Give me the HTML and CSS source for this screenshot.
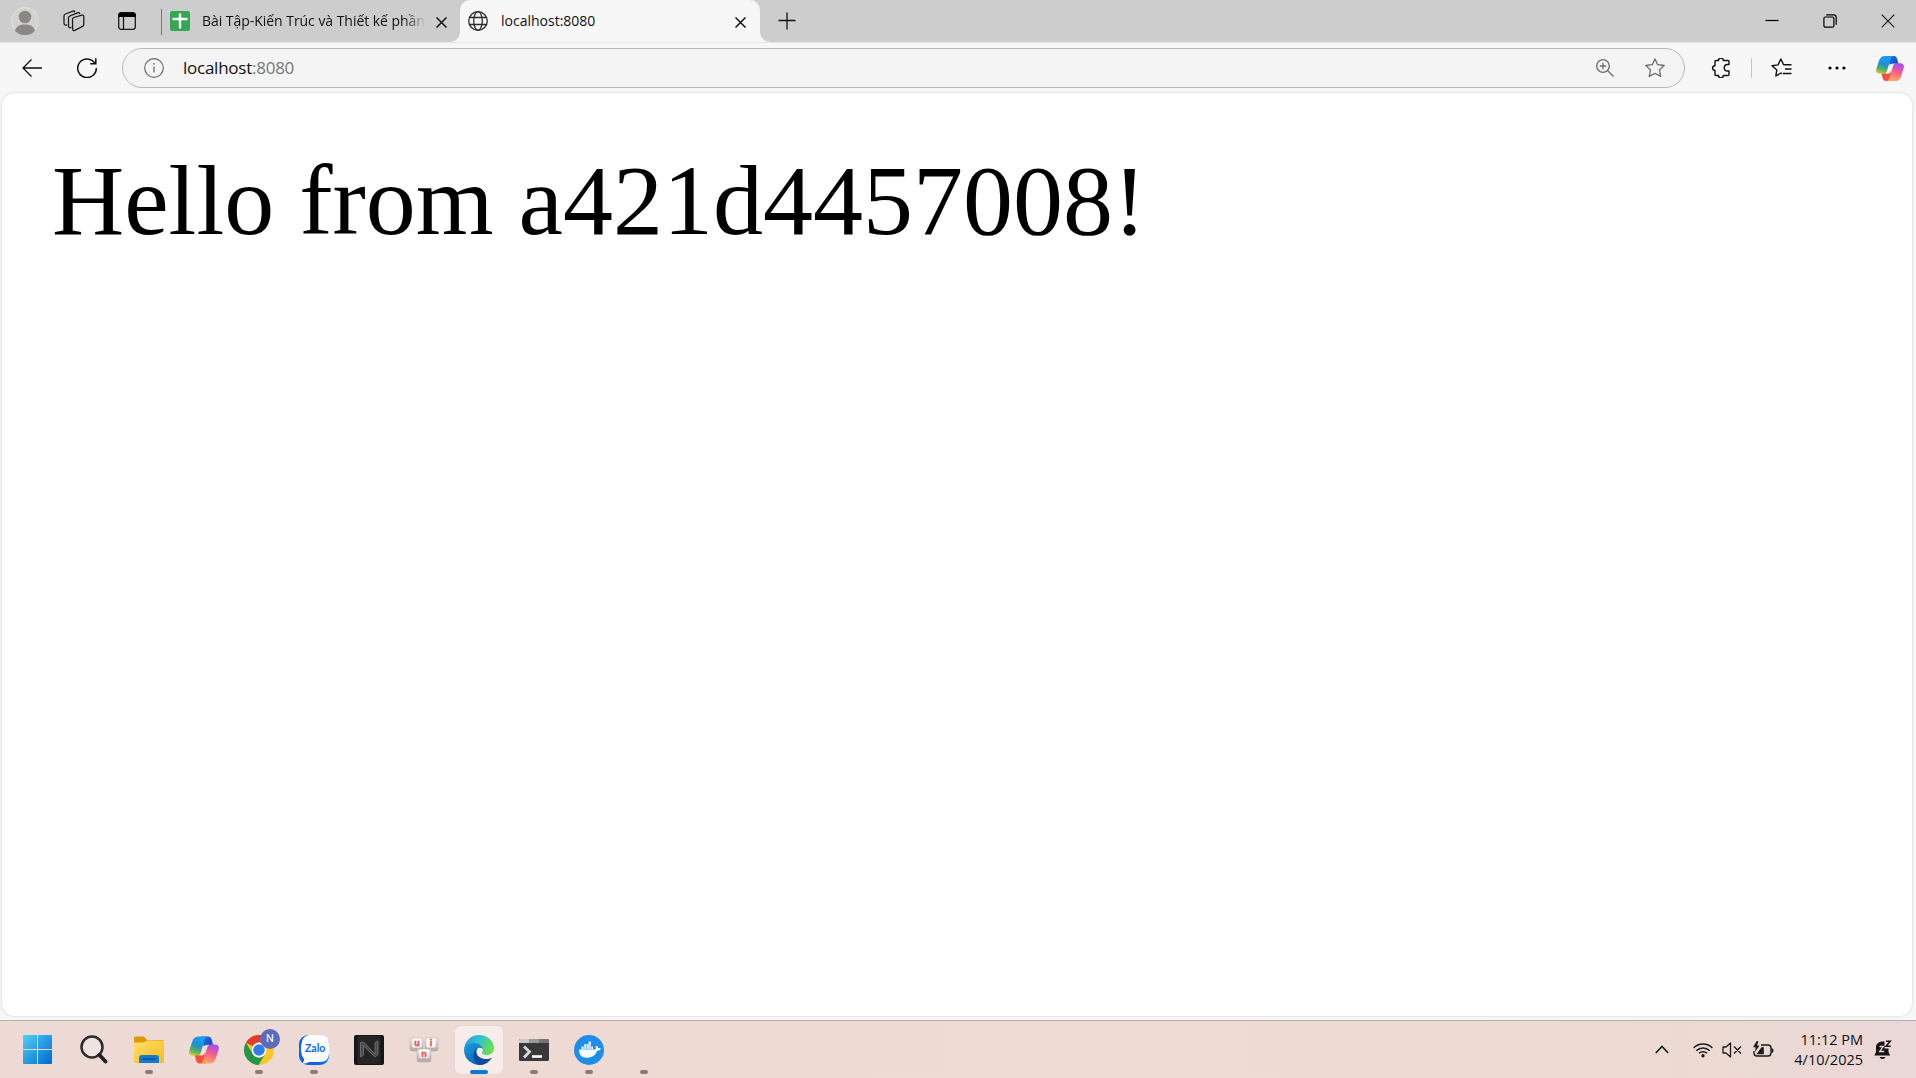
FILE: index.html
```html
<!DOCTYPE html>
<html lang="vi">
<head>
<meta charset="utf-8">
<title>localhost:8080</title>
<link rel="stylesheet" href="styles.css">
</head>
<body>
<svg class="defs" width="0" height="0" aria-hidden="true">
  <defs>
    <linearGradient id="cpA" x1=".3" y1="0" x2="0" y2="1"><stop offset="0" stop-color="#1a9df0"/><stop offset=".4" stop-color="#1f8fd0"/><stop offset=".7" stop-color="#55b35c"/><stop offset="1" stop-color="#f4cf1e"/></linearGradient>
    <linearGradient id="cpB" x1=".7" y1="0" x2=".4" y2="1"><stop offset="0" stop-color="#a24cf0"/><stop offset=".45" stop-color="#f05c90"/><stop offset="1" stop-color="#fcaa60"/></linearGradient>
    <linearGradient id="cpC" x1="0" y1="0" x2="1" y2="1"><stop offset="0" stop-color="#1b7be0"/><stop offset="1" stop-color="#1a3cc0"/></linearGradient>
    <linearGradient id="win" x1="0" y1="0" x2="1" y2="1"><stop offset="0" stop-color="#4fd0fb"/><stop offset="1" stop-color="#0069cc"/></linearGradient>
    <linearGradient id="fold" x1="0" y1="0" x2="1" y2="1"><stop offset="0" stop-color="#ffdf6e"/><stop offset="1" stop-color="#fbbb15"/></linearGradient>
    <linearGradient id="edA" x1="0" y1="0" x2="1" y2=".35"><stop offset="0" stop-color="#1c98d8"/><stop offset=".5" stop-color="#2fc0d8"/><stop offset="1" stop-color="#66df50"/></linearGradient>
    <linearGradient id="edB" x1="0" y1="0" x2=".6" y2="1"><stop offset="0" stop-color="#1c9be0"/><stop offset="1" stop-color="#0b63b8"/></linearGradient>
    <linearGradient id="key" x1="0" y1="0" x2="0" y2="1"><stop offset="0" stop-color="#f4f2f1"/><stop offset="1" stop-color="#aaa5a3"/></linearGradient>
    <symbol id="copilot" viewBox="0 0 30 28">
      <path fill="url(#cpC)" d="M12 .5h7c2.400 0 3.300 1.500 4 4L24 9h-3.500c-2.500 0-4 1-5 4z"/>
      <path fill="#f0513c" d="M17 27.500h-6c-2.500 0-3.500-1.500-4.200-4L5.800 19h4c3 0 4.500-1 5.500-4z"/>
      <path fill="url(#cpA)" d="M9.500.5H19c-2 .5-3 2-3.700 4.500L12 16c-.8 2.500-2 3.500-4.500 3.500H4c-3 0-4.400-2-3.700-5L3.500 5c.9-2.800 3-4.500 6-4.500z"/>
      <path fill="url(#cpB)" d="M20.500 27.500H11c2-.5 3-2 3.700-4.500L18 12c.8-2.500 2-3.500 4.500-3.500H26c3 0 4.400 2 3.700 5L26.500 23c-.9 2.800-3 4.500-6 4.500z"/>
      <path class="hole" d="M20.500 8.700c-2.400.3-3 1.500-3.700 4.200l-1.700 5.200c-.6 1.600-2 1.500-5.600 1.300 1.900-.3 2.500-1.600 3.200-4l1.400-4c.8-2.200 2.800-2.900 6.400-2.700z"/>
    </symbol>
  </defs>
</svg>

<header class="tabstrip">
  <div class="strip-left">
    <svg class="avatar" width="28" height="28" viewBox="0 0 28 28"><circle cx="14" cy="14" r="13.500" fill="#d5d3cf" stroke="#e2dfd9"/><circle cx="14" cy="10" r="6.300" fill="#8b8785"/><path d="M4 24c1-5 5-6.500 10-6.500S23 19 24 24a14 14 0 0 1-20 0z" fill="#8b8785"/></svg>
    <svg class="workspaces" width="22" height="22" viewBox="0 0 22 22" fill="none" stroke="#1c1c1c" stroke-width="1.300" stroke-linejoin="round" stroke-linecap="round"><path d="M9.500 9.500q0-1.500 1.400-2L18.800 5.200q2-.4 2 1.300v8q0 1.400-1.300 1.900l-7.700 3.900q-2.100.8-2.100-1.300z"/><path d="M8 17.500q-2.500.7-2.500-1.500V7.800q0-1.500 1.500-2L15 2.700q1.200-.3 1.700.8"/><path d="M3.700 15Q1 15.400 1 13V6q0-1.500 1.500-2L10 1.100q1.200-.4 1.700.6"/></svg>
    <svg class="tabactions" width="18" height="18" viewBox="0 0 18 18"><rect x=".7" y=".9" width="16.600" height="16.400" rx="2.500" fill="none" stroke="#1a1a1a" stroke-width="1.300"/><path d="M.3 5V3Q.3.3 3 .3h12q2.700 0 2.700 2.700v2z" fill="#000"/><path d="M5.500 5v12" stroke="#1a1a1a" stroke-width="1.300"/></svg>
    <span class="strip-divider"></span>
    <svg class="sheets" width="20" height="20" viewBox="0 0 20 20"><rect width="20" height="20" rx="2" fill="#33a852"/><path d="M10 2.500v15M2.500 8h15" stroke="#fff" stroke-width="2.400"/></svg>
    <span class="tab-title faded">Bài Tập-Kiến Trúc và Thiết kế phần</span>
    <svg class="close" width="11" height="11" viewBox="0 0 11 11" stroke="#111" stroke-width="1.500"><path d="M.5.500l10 10M10.500.500l-10 10"/></svg>
  </div>
  <div class="tab-active">
    <svg width="20" height="20" viewBox="0 0 20 20" fill="none" stroke="#2a2a2a" stroke-width="1.300"><circle cx="10" cy="10" r="9.300"/><ellipse cx="10" cy="10" rx="4.300" ry="9.300"/><path d="M1.500 6.500h17M1.500 13.500h17"/></svg>
    <span class="tab-title current">localhost:8080</span>
    <svg class="close" width="11" height="11" viewBox="0 0 11 11" stroke="#111" stroke-width="1.500"><path d="M.5.500l10 10M10.500.500l-10 10"/></svg>
  </div>
  <div class="strip-right">
    <svg width="18" height="18" viewBox="0 0 18 18" stroke="#111" stroke-width="1.300"><path d="M9 .5v17M.5 8.500h17"/></svg>
    <div class="window-buttons">
      <svg width="14" height="14" viewBox="0 0 14 14"><path d="M.5 6.500h13" stroke="#000" stroke-width="1.200"/></svg>
      <svg width="14" height="14" viewBox="0 0 14 14" fill="none" stroke="#000" stroke-width="1.200"><rect x=".9" y="3" width="10" height="10.200" rx="1.500"/><path d="M3.200.8h7.500q2.500 0 2.500 2.500v7.500"/></svg>
      <svg width="14" height="14" viewBox="0 0 14 14" stroke="#222" stroke-width="1.200"><path d="M.7.700l12.600 12.600M13.300.700L.7 13.300"/></svg>
    </div>
  </div>
</header>

<nav class="toolbar">
  <svg class="back" width="20" height="18" viewBox="0 0 20 18" fill="none" stroke="#111" stroke-width="1.300"><path d="M20 9H.8M9.500.5L1 9l8.500 8.500"/></svg>
  <svg class="reload" width="20" height="20" viewBox="0 0 20 20" fill="none" stroke="#111" stroke-width="1.500"><path d="M18 5.500A9.300 9.300 0 1 0 19.300 10M18.800.3v5.500h-5.600"/></svg>
  <div class="address">
    <svg class="info" width="20" height="20" viewBox="0 0 20 20"><circle cx="10" cy="10" r="9.300" fill="none" stroke="#6b6b6b" stroke-width="1.200"/><path d="M10 8.500v6" stroke="#6b6b6b" stroke-width="1.300"/><circle cx="10" cy="5.800" r=".9" fill="#6b6b6b"/></svg>
    <span class="url">localhost<span class="port">:8080</span></span>
    <svg class="zoom" width="18" height="18" viewBox="0 0 18 18" fill="none" stroke="#6b6b6b" stroke-width="1.300"><circle cx="7" cy="7" r="6.300"/><path d="M11.500 11.500l6 6M7 3.800v6.400M3.800 7h6.400"/></svg>
    <svg class="star" width="20" height="20" viewBox="0 0 20 20" fill="none" stroke="#6b6b6b" stroke-width="1.300" stroke-linejoin="round"><path d="M10 .9l2.700 5.800 6.500.8-4.700 4.400 1.200 6.500L10 15.300l-5.700 3.100 1.200-6.500L.8 7.500l6.500-.8z"/></svg>
  </div>
  <svg class="ext" width="20" height="20" viewBox="0 0 20 20" fill="none" stroke="#111" stroke-width="1.400" stroke-linejoin="round"><path d="M5 2.500h2.500a2.400 2.400 0 0 1 4.800 0H17q1 0 1 1v3h-1.500a2.700 2.700 0 0 0 0 6.500H18v3.500q0 1-1 1h-4.700a2.400 2.400 0 0 1-4.800 0H5q-1 0-1-1v-4a2.400 2.400 0 0 1 0-4.800V3.500q0-1 1-1z"/></svg>
  <span class="tool-divider"></span>
  <svg class="favs" width="21" height="20" viewBox="0 0 21 20" fill="none" stroke="#111" stroke-width="1.400" stroke-linejoin="round"><path d="M11 15.600l-1-.6-5.200 3 1-6L1 7.700l6-.8L9.900 1l2.700 5.800h7.900M14 11h6.500M12 15.500h8.500"/></svg>
  <svg class="dots" width="18" height="4" viewBox="0 0 18 4"><circle cx="2" cy="2" r="1.600"/><circle cx="9" cy="2" r="1.600"/><circle cx="15.900" cy="2" r="1.600"/></svg>
  <svg class="copilot" width="28" height="27"><use href="#copilot"/></svg>
</nav>

<main class="viewport">
  <p class="greeting">Hello from a421d4457008!</p>
</main>

<footer class="taskbar">
  <div class="apps">
    <div class="app start"><svg width="29" height="29" viewBox="0 0 29 29"><path fill="url(#win)" d="M1 0h13v14H0V1q0-1 1-1zM15 0h13q1 0 1 1v13H15zM0 15h14v14H1q-1 0-1-1zM15 15h14v13q0 1-1 1H15z"/></svg></div>
    <div class="app"><svg width="28" height="29" viewBox="0 0 28 29"><circle cx="12" cy="12" r="10.500" fill="#efe3df" stroke="#2b2b2b" stroke-width="2.500"/><path d="M19.500 20l6 6.500" stroke="#222" stroke-width="3.800" stroke-linecap="round"/></svg></div>
    <div class="app open"><svg width="30" height="28" viewBox="0 0 30 28"><path d="M0 2q0-1.500 1.500-1.500H10l3 3.500h15.500Q30 4 30 5.500V9H0z" fill="#dc9a08"/><path d="M0 6.500h10l3-2h17V27H0z" fill="url(#fold)"/><path d="M5 27v-5q0-3 3-3h14q3 0 3 3v5z" fill="#1479cf"/><path d="M8.500 23h13" stroke="#084f94" stroke-width="1.500"/></svg></div>
    <div class="app app-copilot"><svg width="30" height="28"><use href="#copilot"/></svg></div>
    <div class="app open chrome"><svg width="30" height="30" viewBox="0 0 30 30"><circle cx="15" cy="15" r="15" fill="#fbc62a"/><path d="M15 15L2 7.500A15 15 0 0 1 28 7.500H15z" fill="#e33b2e"/><path d="M15 7.500a7.500 7.500 0 0 0-6.500 11.200L2 7.500A15 15 0 0 0 14.500 30L21.500 18.700A7.500 7.500 0 0 1 8.500 18.700z" fill="#23964a"/><circle cx="15" cy="15" r="7.400" fill="#fff"/><circle cx="15" cy="15" r="5.800" fill="#2f7de9"/></svg><span class="profile">N</span></div>
    <div class="app open zalo"><svg width="30" height="30" viewBox="0 0 30 30"><rect width="30" height="30" rx="9" fill="#0866f0"/><path d="M11 0h10q9 0 9 9v9q0 9-9 9H10q-2.500 2-6.500 1.200 2.200-1.700 1.500-4.200Q2 20 2 14q0-14 9-14z" fill="#fff"/></svg><span class="zalo-name">Zalo</span></div>
    <div class="app"><svg width="30" height="30" viewBox="0 0 30 30"><rect width="30" height="30" rx="2" fill="#161616"/><rect x="3.500" y="1" width="23" height="28" fill="#252525"/><path d="M6.500 22V7.500l3-.5L21 19V7.500l3-1.500v13.500l-3 2.500L9.500 11v9z" fill="#4a4a4a" stroke="#777" stroke-width=".8"/></svg></div>
    <div class="app"><svg class="keys" width="30" height="26" viewBox="0 0 30 26"><g fill="url(#key)" stroke="#b6afad" stroke-width=".6"><rect x="1" y="1" width="13" height="13" rx="2"/><rect x="16" y="1" width="13" height="13" rx="2"/><rect x="8" y="12" width="14" height="13" rx="2"/></g><g fill="#faf8f7"><rect x="3.500" y="1.500" width="9" height="9" rx="1"/><rect x="17.500" y="1.500" width="9" height="9" rx="1"/><rect x="10.500" y="12.500" width="9" height="8.500" rx="1"/></g><g fill="#f04b4b" stroke="#f04b4b" stroke-width=".4" font-family="Liberation Sans, sans-serif" font-weight="700" font-size="9" text-anchor="middle"><text x="8" y="8.500">u</text><text x="22" y="8.500">i</text><text x="15" y="19.500">n</text></g></svg></div>
    <div class="app selected open"><svg width="30" height="30" viewBox="0 0 30 30"><path d="M0 15A15 15 0 0 1 15 0c9 0 15 6.500 15 13 0 5-3.500 7-7.500 7-3 0-5-1.300-4.500-2.500 2-3 .5-8.500-6-8.500C6 9 1 12 0 15z" fill="url(#edA)"/><path d="M0 15c1-4.500 5.500-7 10-7 5 0 8.500 3 9 6-4-3-7.500 0-7 4 .5 5.500 6 9.500 13 8A15 15 0 0 1 0 15z" fill="url(#edB)"/><path d="M13 13c-5 4-5 13 1.500 17 6 .3 11-3 13.500-7.500-6 3.500-15 .5-15.500-5-.1-1.800 0-3 .5-4.500z" fill="#104b98"/></svg></div>
    <div class="app open"><svg class="terminal" width="30" height="22" viewBox="0 0 30 22"><rect width="30" height="22" rx="1.500" fill="#393939"/><path d="M0 4V1.500Q0 0 1.500 0H10v4z" fill="#c9c9c9"/><path d="M10 0h10v4H10z" fill="#999"/><path d="M20 0h8.500Q30 0 30 1.500V4H20z" fill="#747474"/><path d="M5 7.500l5.500 5.300L5 18.500" fill="none" stroke="#d8d8d8" stroke-width="2.800"/><path d="M13 17.500h10" stroke="#fff" stroke-width="2.600"/></svg></div>
    <div class="app open"><svg width="30" height="30" viewBox="0 0 30 30"><circle cx="15" cy="15" r="15" fill="#1d8eea"/><path d="M5 14.500h16.500q.7-1.500.2-3l1-.8q1.300 1 1.500 2.500 1.500-.3 2.800.5-1 2-3.800 2-2.500 7-10.500 7Q5 22.700 5 14.500z" fill="#fff"/><path d="M7.500 11.500h11.500v3H7.500zM10 9h7v2.500h-7zM14.500 6.500H17V9h-2.500z" fill="#e8f4ff"/><path d="M10 9v5.500M12.500 9v5.500M15 9v5.500M17.200 9v5.500" stroke="#1d8eea" stroke-width=".5"/></svg></div>
    <div class="app open"></div>
  </div>
  <div class="tray">
    <svg class="chevron" width="14" height="9" viewBox="0 0 14 9" fill="none" stroke="#1b1b1b" stroke-width="1.700"><path d="M.8 8L7 1.500 13.200 8"/></svg>
    <svg class="wifi" width="20" height="16" viewBox="0 0 20 16" fill="none" stroke="#1b1b1b" stroke-width="1.500"><path d="M.6 6a13.300 13.300 0 0 1 18.800 0M3.300 8.700a9.500 9.500 0 0 1 13.400 0M6 11.300a5.700 5.700 0 0 1 8 0"/><circle cx="10" cy="13.800" r="1.700" fill="#1b1b1b" stroke="none"/></svg>
    <svg class="mute" width="20" height="16" viewBox="0 0 20 16" fill="none" stroke="#1b1b1b" stroke-width="1.300" stroke-linejoin="round"><path d="M1 5h3l4.500-4v14L4 11H1zM12 4.500l7 7M19 4.500l-7 7"/></svg>
    <svg class="battery" width="21" height="17" viewBox="0 0 21 17"><path d="M8 4h7q3 0 3 3v5q0 3-3 3H4q-3 0-3-3v-2" fill="none" stroke="#1b1b1b" stroke-width="1.400"/><path d="M18.500 7q2 0 2 2.500t-2 2.500zM3.500 13.200l3-4.200 2-2.800h2.300v7zM3.700 0L0 6.200h2.700L2 11l4.500-6.500H4L5.500.5z" fill="#1b1b1b"/></svg>
    <div class="clock"><span class="time">11:12 PM</span><span class="date">4/10/2025</span></div>
    <svg class="bell" width="18" height="20" viewBox="0 0 18 20"><path d="M9 1.500C4.500 1.500 2 4 2 7.500V12L.3 15.500h15.900L14.500 12V8.500H10.500v-7zM5.500 17h6q-.6 2-3 2t-3-2z" fill="#151515"/><path d="M5.500 6.500h3.700l-3.500 5h4.500" fill="none" stroke="#eed9d6" stroke-width="1.300"/><path d="M12 1.200h4.300l-4.300 5h4.700" fill="none" stroke="#151515" stroke-width="1.500"/></svg>
  </div>
</footer>
</body>
</html>
```
FILE: styles.css
```css
* { box-sizing: border-box; }

body {
  margin: 0;
  height: 1078px;
  display: flex;
  flex-direction: column;
  overflow: hidden;
  background: #f7f7f7;
  color: #111;
  font-family: "Open Sans", "Noto Sans", sans-serif;
}

svg { display: block; flex: none; }
.defs { position: absolute; }
.hole { fill: var(--behind, #f7f7f7); }

/* Tab strip: the upper half shows behind the active tab's rounded corners */
.tabstrip {
  display: flex;
  height: 42px;
  flex: none;
  background: linear-gradient(#cdcdcd 50%, #f7f7f7 50%);
}
.strip-left {
  display: flex;
  align-items: center;
  width: 460px;
  padding-left: 11px;
  background: #cdcdcd;
  border-bottom-right-radius: 10px;
}
.workspaces { margin-left: 24px; }
.tabactions { margin-left: 33px; }
.strip-divider { width: 1px; height: 26px; margin: 2px 8px 0 25px; background: #777; }
.tab-title { font-size: 14px; white-space: nowrap; overflow: hidden; line-height: 24px; }
.faded {
  width: 224px;
  margin-left: 12px;
  letter-spacing: -0.04px;
  -webkit-mask-image: linear-gradient(90deg, #000 90%, transparent);
  mask-image: linear-gradient(90deg, #000 90%, transparent);
}
.close { margin: 2px 0 0 10px; }
.tab-active {
  display: flex;
  align-items: center;
  width: 300px;
  padding: 0 14px 0 8px;
  background: #f7f7f7;
  border-radius: 10px 10px 0 0;
}
.current { margin: 0 auto 0 13px; }
.strip-right {
  display: flex;
  align-items: center;
  justify-content: space-between;
  flex: 1;
  padding: 0 21px 0 18px;
  background: #cdcdcd;
  border-bottom-left-radius: 10px;
}
.window-buttons { display: flex; gap: 44px; }

/* Toolbar */
.toolbar {
  display: flex;
  align-items: center;
  height: 51px;
  flex: none;
  padding: 0 12px 0 22px;
  border-top: 1px solid #e6e6e6;
}
.reload { margin-left: 35px; }
.address {
  display: flex;
  align-items: center;
  width: 1563px;
  height: 40px;
  margin-left: 25px;
  padding: 0 19px 0 21px;
  border: 1px solid #b9b9b9;
  border-radius: 20px;
  background: #f4f4f4;
}
.url { margin: -2px auto 0 19px; font-size: 17px; letter-spacing: -0.25px; }
.port { color: #777; }
.star { margin-left: 31px; }
.ext { margin-left: 26px; }
.tool-divider { width: 1px; height: 20px; margin: 0 19px 0 20px; background: #c4c4c4; }
.dots { margin-left: 36px; }
.copilot { margin-left: auto; }

/* Page */
.viewport {
  flex: none;
  width: 1910px;
  height: 923px;
  margin: 0 0 4px 2px;
  padding: 50px;
  border-radius: 12px;
  background: #fff;
  box-shadow: 0 0 2px #bbb;
}
.greeting {
  margin: 0;
  color: #000;
  font: 100px/115px "Liberation Serif", "Times New Roman", serif;
  white-space: nowrap;
}

/* Taskbar */
.taskbar {
  display: flex;
  align-items: center;
  justify-content: space-between;
  flex: 1;
  padding: 0 24px 0 13px;
  border-top: 1px solid #b5aeac;
  background: linear-gradient(90deg, #eedad4, #efdbd4 60%, #ecdad2 88%, #ead7d8);
}
.apps { display: flex; gap: 7px; }
.app {
  position: relative;
  display: flex;
  align-items: center;
  justify-content: center;
  width: 48px;
  height: 48px;
  border-radius: 5px;
}
.app-copilot { --behind: #efe0db; }
.start { margin-right: 2px; }
.selected { background: #f7ecea; box-shadow: 0 0 1px #cbbab5; }
.open::after {
  content: "";
  position: absolute;
  left: 20px;
  bottom: 0;
  width: 8px;
  height: 4px;
  border-radius: 2px;
  background: #877c79;
}
.selected::after { left: 15px; width: 18px; background: #0a78d4; }
.profile {
  position: absolute;
  left: 25px;
  top: 3px;
  width: 20px;
  height: 20px;
  border-radius: 50%;
  background: #5c6bbd;
  color: #fff;
  font: 11px/20px Roboto, sans-serif;
  text-align: center;
}
.zalo-name {
  position: absolute;
  left: 15px;
  top: 15px;
  color: #0866f0;
  font: 700 10.500px/14px Lato, sans-serif;
}
.tray { display: flex; align-items: center; }
.wifi { margin-left: 24px; }
.mute { margin-left: 9px; }
.battery { margin-left: 11px; }
.clock {
  display: flex;
  flex-direction: column;
  align-items: flex-end;
  width: 89px;
  font-size: 14.500px;
  line-height: 20px;
}
.bell { margin-left: 11px; }
```
